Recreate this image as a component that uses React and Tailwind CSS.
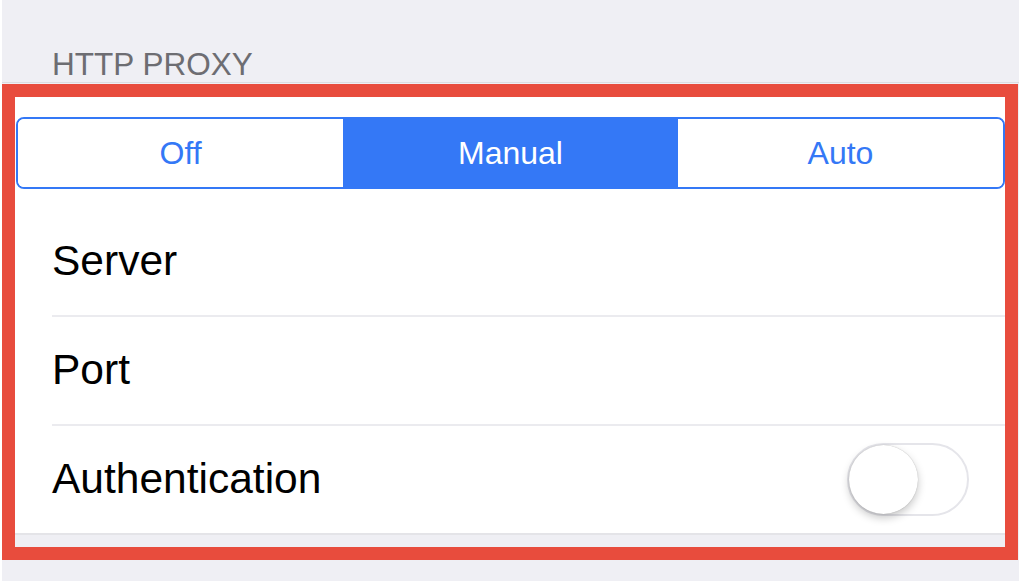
import React, { useState } from "react";

const modes = ["Off", "Manual", "Auto"];

function Row({ label, children, last }) {
  return (
    <div className="flex flex-col">
      <div className="h-[107px] flex items-center justify-between pl-[37px] pr-[36px]">
        <span className="text-[42.5px] text-black leading-none">{label}</span>
        {children}
      </div>
      {!last && <div className="ml-[37px] h-[2px] bg-[#ebebef]" />}
    </div>
  );
}

export default function App() {
  const [mode, setMode] = useState("Manual");
  const [auth, setAuth] = useState(false);

  return (
    <div className="w-[1024px] h-[581px] bg-white overflow-hidden" style={{ fontFamily: '"Liberation Sans", Arial, sans-serif' }}>
      <div className="ml-[2px] w-[1017px] h-[581px] bg-[#efeff4] flex flex-col">
        {/* section header */}
        <div className="h-[82px] pt-[49px] pl-[50px]">
          <span className="text-[31.5px] leading-none text-[#6d6d72]">HTTP PROXY</span>
        </div>
        <div className="h-[1px] bg-[#dcdce0]" />
        <div className="h-[1px]" />

        {/* highlighted group */}
        <div className="w-[1016px] h-[476px] border-[13px] border-[#e84c3d] bg-white flex flex-col">
          <div className="h-[111px] pt-[20px] pl-[1px]">
            <div className="h-[72px] flex border-2 border-[#3478f6] rounded-[8px] overflow-hidden">
              {modes.map((m, i) => (
                <button
                  key={m}
                  onClick={() => setMode(m)}
                  className={`flex-1 flex items-center justify-center text-[32px] leading-none ${
                    mode === m ? "bg-[#3478f6] text-white" : "bg-white text-[#3478f6]"
                  } ${i === 1 ? "flex-[1.03]" : ""}`}
                >
                  {m}
                </button>
              ))}
            </div>
          </div>

          <Row label="Server" />
          <Row label="Port" />
          <Row label="Authentication" last>
            <button
              onClick={() => setAuth(!auth)}
              className={`relative w-[122px] h-[73px] rounded-full border-2 ${
                auth ? "bg-[#4cd964] border-[#4cd964]" : "bg-white border-[#e5e5ea]"
              }`}
            >
              <span
                className={`absolute top-[0px] w-[69px] h-[69px] rounded-full bg-white shadow-[0_4px_8px_rgba(0,0,0,0.22),0_0_1px_rgba(0,0,0,0.3)] ${
                  auth ? "left-[49px]" : "left-[0px]"
                }`}
              />
            </button>
          </Row>

          <div className="flex-1 bg-[#efeff4] border-t-2 border-[#e4e4e8]" />
        </div>
        <div className="flex-1" />
      </div>
    </div>
  );
}
